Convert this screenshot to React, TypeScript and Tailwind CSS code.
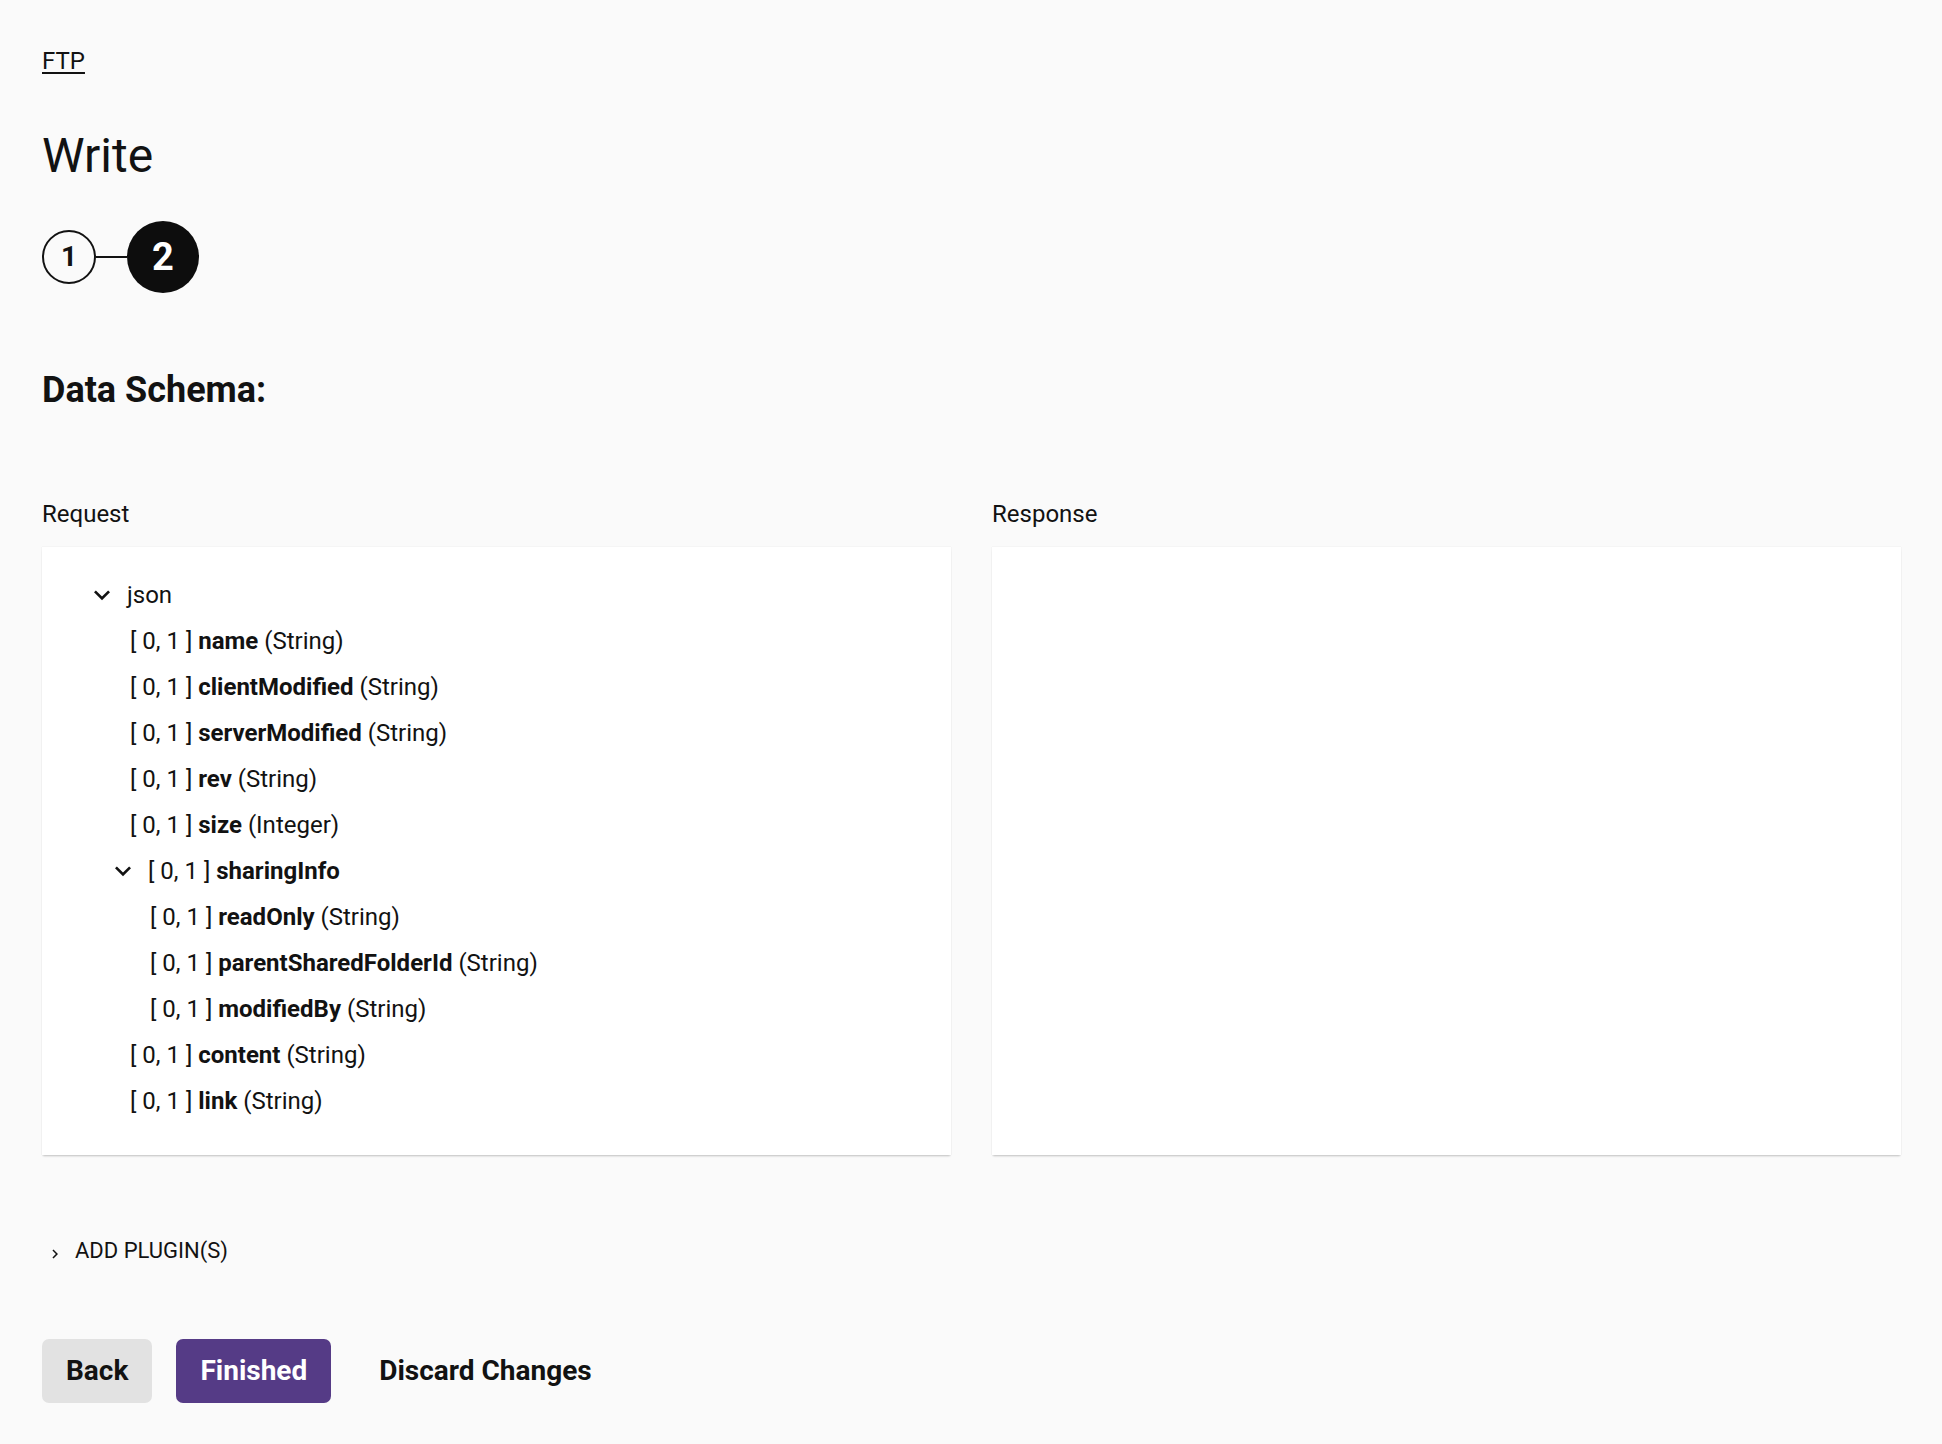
import { ReactNode } from "react";

type Row = {
  label?: string;
  name: string;
  type?: string;
  indent: number;
  expandable?: boolean;
};

// pl offsets are measured from the card's left edge
const rows: Row[] = [
  { name: "json", indent: 44, expandable: true },
  { label: "[ 0, 1 ]", name: "name", type: "String", indent: 88 },
  { label: "[ 0, 1 ]", name: "clientModified", type: "String", indent: 88 },
  { label: "[ 0, 1 ]", name: "serverModified", type: "String", indent: 88 },
  { label: "[ 0, 1 ]", name: "rev", type: "String", indent: 88 },
  { label: "[ 0, 1 ]", name: "size", type: "Integer", indent: 88 },
  { label: "[ 0, 1 ]", name: "sharingInfo", indent: 65, expandable: true },
  { label: "[ 0, 1 ]", name: "readOnly", type: "String", indent: 108 },
  { label: "[ 0, 1 ]", name: "parentSharedFolderId", type: "String", indent: 108 },
  { label: "[ 0, 1 ]", name: "modifiedBy", type: "String", indent: 108 },
  { label: "[ 0, 1 ]", name: "content", type: "String", indent: 88 },
  { label: "[ 0, 1 ]", name: "link", type: "String", indent: 88 },
];

const indentClass: Record<number, string> = {
  44: "pl-[44px]",
  65: "pl-[65px]",
  88: "pl-[88px]",
  108: "pl-[108px]",
};

function ExpandMore() {
  return (
    <svg viewBox="0 0 24 24" className="w-8 h-8 shrink-0 fill-[#121212]">
      <path d="M16.59 8.59L12 13.17 7.41 8.59 6 10l6 6 6-6z" />
    </svg>
  );
}

function ChevronRight() {
  return (
    <svg viewBox="0 0 24 24" className="w-[18px] h-[18px] shrink-0 mt-[5px] fill-[#121212]">
      <path d="M10 6L8.59 7.41 13.17 12l-4.58 4.59L10 18l6-6z" />
    </svg>
  );
}

function TreeRow({ row }: { row: Row }) {
  return (
    <div className={`flex items-center h-[46px] ${indentClass[row.indent]}`}>
      {row.expandable && <ExpandMore />}
      <span className={`whitespace-pre ${row.expandable ? "ml-[9px]" : ""}`}>
        {row.label && <>{row.label} </>}
        {row.label ? <b className="font-bold">{row.name}</b> : row.name}
        {row.type && <> ({row.type})</>}
      </span>
    </div>
  );
}

function Panel({ title, children }: { title: string; children?: ReactNode }) {
  return (
    <div className="flex flex-col">
      <div className="text-[24px] leading-[36px]">{title}</div>
      <div className="mt-[15px] flex-1 bg-white pt-[25px] pb-[31px] text-[24px] leading-[36px] shadow-[0_2px_2px_-1px_rgba(0,0,0,0.22),0_0_1px_rgba(0,0,0,0.12)]">
        {children}
      </div>
    </div>
  );
}

export default function App() {
  return (
    <div className="min-h-screen bg-[#fafafa] pl-[42px] pr-[41px] pt-[43px] pb-[29px] text-[#121212] font-['Roboto','Liberation_Sans',sans-serif]">
      <a href="#" className="inline-block text-[24px] leading-[36px] underline decoration-[2px] underline-offset-[3px]">
        FTP
      </a>

      <h1 className="mt-[49px] text-[48px] leading-[56px] font-normal">Write</h1>

      {/* Stepper */}
      <div className="mt-[37px] flex items-center h-[72px]">
        <div className="w-[54px] h-[54px] rounded-full border-2 border-[#121212] flex items-center justify-center text-[28px] font-bold leading-none">
          1
        </div>
        <div className="w-[31px] h-[2px] bg-[#121212]" />
        <div className="w-[72px] h-[72px] rounded-full bg-[#0d0d0d] text-white flex items-center justify-center text-[38px] font-bold leading-none">
          2
        </div>
      </div>

      <h2 className="mt-[75px] text-[36px] leading-[44px] font-bold">Data Schema:</h2>

      <div className="mt-[84px] grid grid-cols-2 gap-x-[41px]">
        <Panel title="Request">
          {rows.map((r) => (
            <TreeRow key={r.name} row={r} />
          ))}
        </Panel>
        <Panel title="Response" />
      </div>

      <div className="mt-[80px] flex items-center pl-[4px] h-[32px] text-[22px] leading-[32px]">
        <ChevronRight />
        <span className="ml-[11px]">ADD PLUGIN(S)</span>
      </div>

      {/* Actions */}
      <div className="mt-[72px] flex gap-[24px] h-[64px]">
        <button className="px-[24px] rounded-[7px] bg-[#e2e2e2] text-[28px] font-bold text-[#121212]">Back</button>
        <button className="px-[24px] rounded-[7px] bg-[#553b86] text-[28px] font-bold text-white">Finished</button>
        <button className="px-[24px] rounded-[7px] text-[28px] font-bold text-[#121212]">Discard Changes</button>
      </div>
    </div>
  );
}
